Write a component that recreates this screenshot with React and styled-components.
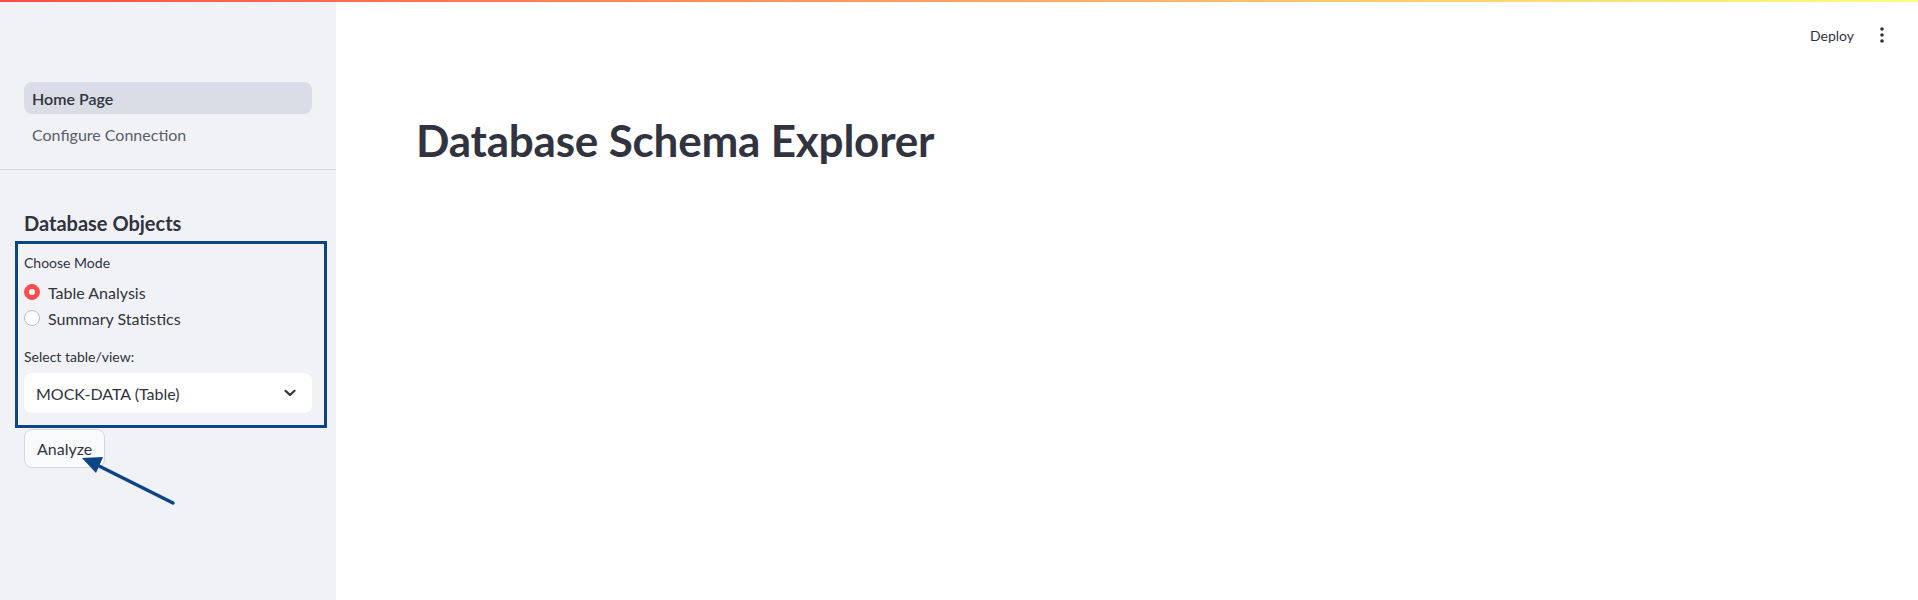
import React from "react";
import styled, { createGlobalStyle } from "styled-components";

const Global = createGlobalStyle`
  html, body { margin: 0; padding: 0; background: #ffffff; }
  body { font-family: "Source Sans Pro", Lato, "Noto Sans", sans-serif; color: #31333f; }
  * { box-sizing: border-box; }
`;

const Page = styled.div`
  width: 1918px;
  height: 600px;
  display: flex;
  flex-direction: column;
  overflow: hidden;
`;

const Decoration = styled.div`
  height: 2px;
  flex: none;
  background: linear-gradient(90deg, rgb(255, 75, 75), rgb(255, 253, 128));
`;

const Body = styled.div`
  flex: 1;
  display: flex;
`;

const Sidebar = styled.aside`
  position: relative;
  width: 336px;
  flex: none;
  background: #f0f2f6;
  display: flex;
  flex-direction: column;
  padding-top: 80px;
`;

const Nav = styled.nav`
  display: flex;
  flex-direction: column;
  gap: 4px;
  padding: 0 24px;
`;

const NavItem = styled.div`
  height: 32px;
  display: flex;
  align-items: center;
  padding: 0 8px;
  border-radius: 8px;
  font-size: 16px;
  background: ${(p) => (p.$active ? "#dadde6" : "transparent")};
  color: ${(p) => (p.$active ? "#31333f" : "#5b5e69")};
  font-weight: ${(p) => (p.$active ? 600 : 400)};
`;

const Divider = styled.hr`
  margin: 19px 0 0;
  border: none;
  height: 1px;
  background: #d4d7dd;
`;

const SideContent = styled.div`
  padding: 38px 24px 0;
  display: flex;
  flex-direction: column;
`;

const SideHeading = styled.h3`
  margin: 0;
  font-size: 20px;
  line-height: 30px;
  font-weight: 700;
  color: #31333f;
`;

const FieldLabel = styled.div`
  font-size: 14px;
  line-height: 20px;
  color: #31333f;
  margin-top: ${(p) => p.$mt}px;
`;

const RadioGroup = styled.div`
  display: flex;
  flex-direction: column;
  gap: 2px;
  margin-top: 7px;
`;

const RadioRow = styled.label`
  display: flex;
  align-items: center;
  gap: 8px;
  height: 24px;
  font-size: 16px;
  color: #31333f;
`;

const RadioDot = styled.span`
  width: 16px;
  height: 16px;
  border-radius: 50%;
  flex: none;
  background: ${(p) => (p.$checked ? "#ff4b4b" : "#ffffff")};
  border: 1px solid ${(p) => (p.$checked ? "#ff4b4b" : "#b9bcc4")};
  display: flex;
  align-items: center;
  justify-content: center;
  &::after {
    content: "";
    width: 6px;
    height: 6px;
    border-radius: 50%;
    background: #ffffff;
    display: ${(p) => (p.$checked ? "block" : "none")};
  }
`;

const Select = styled.div`
  margin-top: 6px;
  height: 40px;
  background: #ffffff;
  border-radius: 8px;
  display: flex;
  align-items: center;
  justify-content: space-between;
  padding: 0 16px 0 12px;
  font-size: 16px;
  color: #31333f;
`;

const Button = styled.button`
  margin-top: 16px;
  align-self: flex-start;
  height: 39px;
  padding: 0 12px;
  border: 1px solid #d3d6dc;
  border-radius: 8px;
  background: #f9fafb;
  font-family: inherit;
  font-size: 16px;
  color: #31333f;
`;

const AnnotationBox = styled.div`
  position: absolute;
  left: 15px;
  top: 239px;
  width: 312px;
  height: 187px;
  border: 3px solid #0b4585;
  pointer-events: none;
`;

const ArrowSvg = styled.svg`
  position: absolute;
  left: 70px;
  top: 440px;
  overflow: visible;
  pointer-events: none;
`;

const Main = styled.main`
  flex: 1;
  display: flex;
  flex-direction: column;
  background: #ffffff;
`;

const Header = styled.header`
  height: 70px;
  display: flex;
  align-items: center;
  justify-content: flex-end;
  gap: 20px;
  padding: 0 28px 0 0;
  margin-top: -2px;
`;

const DeployText = styled.span`
  font-size: 14px;
  color: #31333f;
`;

const Title = styled.h1`
  margin: 42px 0 0 80px;
  font-size: 44px;
  line-height: 56px;
  font-weight: 700;
  color: #31333f;
  letter-spacing: -0.2px;
`;

function Chevron() {
  return (
    <svg width="12" height="8" viewBox="0 0 12 8">
      <polyline points="1.5,1.8 6,6 10.5,1.8" fill="none" stroke="#31333f" strokeWidth="2.2" strokeLinecap="round" strokeLinejoin="round" />
    </svg>
  );
}

function MoreIcon() {
  return (
    <svg width="16" height="20" viewBox="0 0 16 20">
      <circle cx="8" cy="4" r="1.8" fill="#31333f" />
      <circle cx="8" cy="10" r="1.8" fill="#31333f" />
      <circle cx="8" cy="16" r="1.8" fill="#31333f" />
    </svg>
  );
}

export default function App() {
  return (
    <>
      <Global />
      <Page>
        <Decoration />
        <Body>
          <Sidebar>
            <Nav>
              <NavItem $active>Home Page</NavItem>
              <NavItem>Configure Connection</NavItem>
            </Nav>
            <Divider />
            <SideContent>
              <SideHeading>Database Objects</SideHeading>
              <FieldLabel $mt={15}>Choose Mode</FieldLabel>
              <RadioGroup>
                <RadioRow>
                  <RadioDot $checked />
                  Table Analysis
                </RadioRow>
                <RadioRow>
                  <RadioDot />
                  Summary Statistics
                </RadioRow>
              </RadioGroup>
              <FieldLabel $mt={17}>Select table/view:</FieldLabel>
              <Select>
                <span>MOCK-DATA (Table)</span>
                <Chevron />
              </Select>
              <Button>Analyze</Button>
            </SideContent>
            <AnnotationBox />
            <ArrowSvg width="110" height="70" viewBox="0 0 110 70">
              <line x1="103" y1="61" x2="24" y2="21.5" stroke="#0b4585" strokeWidth="3.5" strokeLinecap="round" />
              <polygon points="12,16 33,15 26,31" fill="#0b4585" />
            </ArrowSvg>
          </Sidebar>
          <Main>
            <Header>
              <DeployText>Deploy</DeployText>
              <MoreIcon />
            </Header>
            <Title>Database Schema Explorer</Title>
          </Main>
        </Body>
      </Page>
    </>
  );
}
